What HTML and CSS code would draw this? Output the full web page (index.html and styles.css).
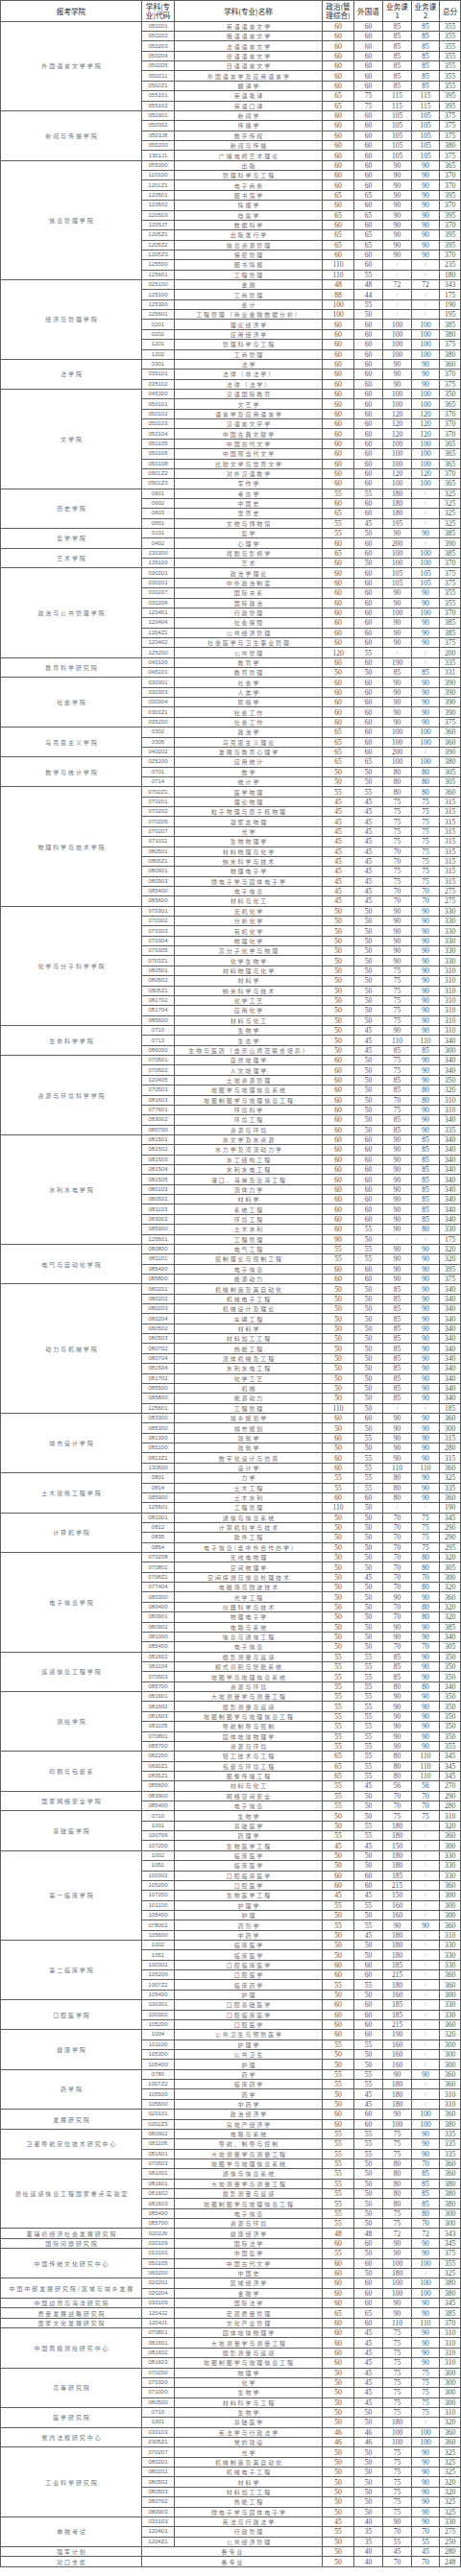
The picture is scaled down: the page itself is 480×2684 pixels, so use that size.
FILE: index.html
```html
<!DOCTYPE html>
<html lang="zh-CN">
<head>
<meta charset="utf-8">
<title>复试基本分数线</title>
<link rel="stylesheet" href="styles.css">
</head>
<body>
<table class="t">
<colgroup><col class="w1"><col class="w2"><col class="w3"><col class="w4"><col class="w5"><col class="w6"><col class="w7"><col class="w8"></colgroup>
<tbody>
<tr class="h"><th>报考学院</th><th>学科(专<br>业)代码</th><th>学科(专业)名称</th><th>政治(管<br>理综合)</th><th>外国语</th><th>业务课<br>1</th><th>业务课<br>2</th><th>总分</th></tr>

<tr><td class="s" rowspan="9">外国语言文学学院</td><td class="c">050201</td><td class="n">英语语言文学</td><td>60</td><td>60</td><td>85</td><td>85</td><td>355</td></tr>
<tr><td class="c">050202</td><td class="n">俄语语言文学</td><td>60</td><td>60</td><td>85</td><td>85</td><td>355</td></tr>
<tr><td class="c">050203</td><td class="n">法语语言文学</td><td>60</td><td>60</td><td>85</td><td>85</td><td>355</td></tr>
<tr><td class="c">050204</td><td class="n">德语语言文学</td><td>60</td><td>60</td><td>85</td><td>85</td><td>355</td></tr>
<tr><td class="c">050205</td><td class="n">日语语言文学</td><td>60</td><td>60</td><td>85</td><td>85</td><td>355</td></tr>
<tr><td class="c">050211</td><td class="n">外国语言学及应用语言学</td><td>60</td><td>60</td><td>85</td><td>85</td><td>355</td></tr>
<tr><td class="c">0502Z1</td><td class="n">翻译学</td><td>60</td><td>60</td><td>85</td><td>85</td><td>355</td></tr>
<tr><td class="c">055101</td><td class="n">英语笔译</td><td>65</td><td>75</td><td>115</td><td>115</td><td>395</td></tr>
<tr><td class="c">055102</td><td class="n">英语口译</td><td>65</td><td>75</td><td>115</td><td>115</td><td>395</td></tr>

<tr><td class="s" rowspan="5">新闻与传播学院</td><td class="c">050301</td><td class="n">新闻学</td><td>60</td><td>60</td><td>105</td><td>105</td><td>375</td></tr>
<tr><td class="c">050302</td><td class="n">传播学</td><td>60</td><td>60</td><td>105</td><td>105</td><td>375</td></tr>
<tr><td class="c">0503J8</td><td class="n">数字传媒</td><td>60</td><td>60</td><td>105</td><td>105</td><td>375</td></tr>
<tr><td class="c">055200</td><td class="n">新闻与传播</td><td>60</td><td>60</td><td>105</td><td>105</td><td>380</td></tr>
<tr><td class="c">1301J1</td><td class="n">广播电视艺术理论</td><td>60</td><td>60</td><td>105</td><td>105</td><td>375</td></tr>

<tr><td class="s" rowspan="12">信息管理学院</td><td class="c">055300</td><td class="n">出版</td><td>60</td><td>60</td><td>90</td><td>90</td><td>365</td></tr>
<tr><td class="c">120100</td><td class="n">管理科学与工程</td><td>60</td><td>60</td><td>90</td><td>90</td><td>370</td></tr>
<tr><td class="c">1201Z1</td><td class="n">电子商务</td><td>60</td><td>60</td><td>90</td><td>90</td><td>370</td></tr>
<tr><td class="c">120501</td><td class="n">图书馆学</td><td>65</td><td>65</td><td>90</td><td>90</td><td>395</td></tr>
<tr><td class="c">120502</td><td class="n">情报学</td><td>60</td><td>60</td><td>90</td><td>90</td><td>370</td></tr>
<tr><td class="c">120503</td><td class="n">档案学</td><td>65</td><td>65</td><td>90</td><td>90</td><td>395</td></tr>
<tr><td class="c">1205J7</td><td class="n">数据科学</td><td>60</td><td>60</td><td>90</td><td>90</td><td>370</td></tr>
<tr><td class="c">1205Z1</td><td class="n">出版发行学</td><td>65</td><td>65</td><td>90</td><td>90</td><td>395</td></tr>
<tr><td class="c">1205Z2</td><td class="n">信息资源管理</td><td>65</td><td>65</td><td>90</td><td>90</td><td>395</td></tr>
<tr><td class="c">1205Z3</td><td class="n">保密管理</td><td>60</td><td>60</td><td>90</td><td>90</td><td>370</td></tr>
<tr><td class="c">125500</td><td class="n">图书情报</td><td>110</td><td>60</td><td class="x">/</td><td class="x">/</td><td>235</td></tr>
<tr><td class="c">125601</td><td class="n">工程管理</td><td>110</td><td>55</td><td class="x">/</td><td class="x">/</td><td>180</td></tr>

<tr><td class="s" rowspan="8">经济与管理学院</td><td class="c">025100</td><td class="n">金融</td><td>48</td><td>48</td><td>72</td><td>72</td><td>343</td></tr>
<tr><td class="c">125100</td><td class="n">工商管理</td><td>88</td><td>44</td><td class="x">/</td><td class="x">/</td><td>175</td></tr>
<tr><td class="c">125300</td><td class="n">会计</td><td>100</td><td>55</td><td class="x">/</td><td class="x">/</td><td>190</td></tr>
<tr><td class="c">125601</td><td class="n">工程管理（商业金融数据分析）</td><td>100</td><td>50</td><td class="x">/</td><td class="x">/</td><td>195</td></tr>
<tr><td class="c">0201</td><td class="n">理论经济学</td><td>60</td><td>60</td><td>100</td><td>100</td><td>385</td></tr>
<tr><td class="c">0202</td><td class="n">应用经济学</td><td>60</td><td>60</td><td>100</td><td>100</td><td>380</td></tr>
<tr><td class="c">1201</td><td class="n">管理科学与工程</td><td>60</td><td>60</td><td>100</td><td>100</td><td>375</td></tr>
<tr><td class="c">1202</td><td class="n">工商管理</td><td>60</td><td>60</td><td>100</td><td>100</td><td>380</td></tr>

<tr><td class="s" rowspan="3">法学院</td><td class="c">0301</td><td class="n">法学</td><td>60</td><td>60</td><td>90</td><td>90</td><td>360</td></tr>
<tr><td class="c">035101</td><td class="n">法律（非法学）</td><td>60</td><td>60</td><td>90</td><td>90</td><td>370</td></tr>
<tr><td class="c">035102</td><td class="n">法律（法学）</td><td>60</td><td>60</td><td>90</td><td>90</td><td>375</td></tr>

<tr><td class="s" rowspan="10">文学院</td><td class="c">045300</td><td class="n">汉语国际教育</td><td>60</td><td>60</td><td>100</td><td>100</td><td>350</td></tr>
<tr><td class="c">050101</td><td class="n">文艺学</td><td>60</td><td>60</td><td>100</td><td>100</td><td>365</td></tr>
<tr><td class="c">050102</td><td class="n">语言学及应用语言学</td><td>60</td><td>60</td><td>120</td><td>120</td><td>370</td></tr>
<tr><td class="c">050103</td><td class="n">汉语言文字学</td><td>60</td><td>60</td><td>120</td><td>120</td><td>370</td></tr>
<tr><td class="c">050104</td><td class="n">中国古典文献学</td><td>60</td><td>60</td><td>120</td><td>120</td><td>370</td></tr>
<tr><td class="c">050105</td><td class="n">中国古代文学</td><td>60</td><td>60</td><td>100</td><td>100</td><td>365</td></tr>
<tr><td class="c">050106</td><td class="n">中国现当代文学</td><td>60</td><td>60</td><td>100</td><td>100</td><td>365</td></tr>
<tr><td class="c">050108</td><td class="n">比较文学与世界文学</td><td>60</td><td>60</td><td>100</td><td>100</td><td>365</td></tr>
<tr><td class="c">0501Z2</td><td class="n">对外汉语教学</td><td>60</td><td>60</td><td>120</td><td>120</td><td>370</td></tr>
<tr><td class="c">0501Z3</td><td class="n">写作学</td><td>60</td><td>60</td><td>100</td><td>100</td><td>365</td></tr>

<tr><td class="s" rowspan="4">历史学院</td><td class="c">0601</td><td class="n">考古学</td><td>55</td><td>55</td><td>180</td><td class="x">/</td><td>325</td></tr>
<tr><td class="c">0602</td><td class="n">中国史</td><td>60</td><td>60</td><td>180</td><td class="x">/</td><td>325</td></tr>
<tr><td class="c">0603</td><td class="n">世界史</td><td>65</td><td>60</td><td>180</td><td class="x">/</td><td>325</td></tr>
<tr><td class="c">0651</td><td class="n">文物与博物馆</td><td>55</td><td>45</td><td>195</td><td class="x">/</td><td>325</td></tr>

<tr><td class="s" rowspan="2">哲学学院</td><td class="c">0101</td><td class="n">哲学</td><td>55</td><td>50</td><td>90</td><td>90</td><td>385</td></tr>
<tr><td class="c">0402</td><td class="n">心理学</td><td>60</td><td>60</td><td>200</td><td class="x">/</td><td>390</td></tr>

<tr><td class="s" rowspan="2">艺术学院</td><td class="c">130300</td><td class="n">戏剧与影视学</td><td>65</td><td>60</td><td>100</td><td>100</td><td>385</td></tr>
<tr><td class="c">135100</td><td class="n">艺术</td><td>60</td><td>50</td><td>100</td><td>100</td><td>370</td></tr>

<tr><td class="s" rowspan="9">政治与公共管理学院</td><td class="c">030201</td><td class="n">政治学理论</td><td>60</td><td>60</td><td>105</td><td>105</td><td>375</td></tr>
<tr><td class="c">030202</td><td class="n">中外政治制度</td><td>60</td><td>60</td><td>105</td><td>105</td><td>375</td></tr>
<tr><td class="c">030207</td><td class="n">国际关系</td><td>60</td><td>60</td><td>90</td><td>90</td><td>355</td></tr>
<tr><td class="c">030206</td><td class="n">国际政治</td><td>60</td><td>60</td><td>90</td><td>90</td><td>355</td></tr>
<tr><td class="c">120401</td><td class="n">行政管理</td><td>60</td><td>60</td><td>100</td><td>100</td><td>370</td></tr>
<tr><td class="c">120404</td><td class="n">社会保障</td><td>60</td><td>60</td><td>90</td><td>90</td><td>385</td></tr>
<tr><td class="c">1204Z1</td><td class="n">公共经济管理</td><td>60</td><td>60</td><td>90</td><td>90</td><td>385</td></tr>
<tr><td class="c">120402</td><td class="n">社会医学与卫生事业管理</td><td>60</td><td>60</td><td>90</td><td>90</td><td>375</td></tr>
<tr><td class="c">125200</td><td class="n">公共管理</td><td>120</td><td>55</td><td class="x">/</td><td class="x">/</td><td>200</td></tr>

<tr><td class="s" rowspan="2">教育科学研究院</td><td class="c">040100</td><td class="n">教育学</td><td>60</td><td>60</td><td>190</td><td class="x">/</td><td>335</td></tr>
<tr><td class="c">045101</td><td class="n">教育管理</td><td>50</td><td>50</td><td>85</td><td>85</td><td>331</td></tr>

<tr><td class="s" rowspan="5">社会学院</td><td class="c">030301</td><td class="n">社会学</td><td>60</td><td>60</td><td>90</td><td>90</td><td>390</td></tr>
<tr><td class="c">030303</td><td class="n">人类学</td><td>60</td><td>60</td><td>90</td><td>90</td><td>390</td></tr>
<tr><td class="c">030304</td><td class="n">民俗学</td><td>60</td><td>60</td><td>90</td><td>90</td><td>390</td></tr>
<tr><td class="c">0303Z1</td><td class="n">社会工作</td><td>60</td><td>60</td><td>90</td><td>90</td><td>390</td></tr>
<tr><td class="c">035200</td><td class="n">社会工作</td><td>60</td><td>60</td><td>90</td><td>90</td><td>375</td></tr>

<tr><td class="s" rowspan="3">马克思主义学院</td><td class="c">0302</td><td class="n">政治学</td><td>65</td><td>60</td><td>100</td><td>100</td><td>360</td></tr>
<tr><td class="c">0305</td><td class="n">马克思主义理论</td><td>65</td><td>60</td><td>100</td><td>100</td><td>360</td></tr>
<tr><td class="c">040202</td><td class="n">发展与教育心理学</td><td>65</td><td>60</td><td>200</td><td class="x">/</td><td>390</td></tr>

<tr><td class="s" rowspan="3">数学与统计学院</td><td class="c">025200</td><td class="n">应用统计</td><td>65</td><td>65</td><td>100</td><td>100</td><td>380</td></tr>
<tr><td class="c">0701</td><td class="n">数学</td><td>50</td><td>50</td><td>80</td><td>80</td><td>305</td></tr>
<tr><td class="c">0714</td><td class="n">统计学</td><td>50</td><td>50</td><td>80</td><td>80</td><td>305</td></tr>

<tr><td class="s" rowspan="12">物理科学与技术学院</td><td class="c">0702Z1</td><td class="n">医学物理</td><td>55</td><td>55</td><td>80</td><td>80</td><td>360</td></tr>
<tr><td class="c">070201</td><td class="n">理论物理</td><td>45</td><td>45</td><td>75</td><td>75</td><td>315</td></tr>
<tr><td class="c">070202</td><td class="n">粒子物理与原子核物理</td><td>45</td><td>45</td><td>75</td><td>75</td><td>315</td></tr>
<tr><td class="c">070205</td><td class="n">凝聚态物理</td><td>45</td><td>45</td><td>75</td><td>75</td><td>315</td></tr>
<tr><td class="c">070207</td><td class="n">光学</td><td>45</td><td>45</td><td>75</td><td>75</td><td>315</td></tr>
<tr><td class="c">071011</td><td class="n">生物物理学</td><td>45</td><td>45</td><td>75</td><td>75</td><td>315</td></tr>
<tr><td class="c">080501</td><td class="n">材料物理与化学</td><td>45</td><td>45</td><td>70</td><td>75</td><td>315</td></tr>
<tr><td class="c">0805Z1</td><td class="n">纳米科学与技术</td><td>45</td><td>45</td><td>70</td><td>75</td><td>315</td></tr>
<tr><td class="c">080901</td><td class="n">物理电子学</td><td>45</td><td>45</td><td>75</td><td>75</td><td>315</td></tr>
<tr><td class="c">080903</td><td class="n">微电子学与固体电子学</td><td>45</td><td>45</td><td>75</td><td>75</td><td>315</td></tr>
<tr><td class="c">085400</td><td class="n">电子信息</td><td>45</td><td>45</td><td>70</td><td>70</td><td>275</td></tr>
<tr><td class="c">085600</td><td class="n">材料与化工</td><td>45</td><td>45</td><td>70</td><td>70</td><td>275</td></tr>

<tr><td class="s" rowspan="12">化学与分子科学学院</td><td class="c">070301</td><td class="n">无机化学</td><td>50</td><td>50</td><td>90</td><td>90</td><td>330</td></tr>
<tr><td class="c">070302</td><td class="n">分析化学</td><td>50</td><td>50</td><td>90</td><td>90</td><td>330</td></tr>
<tr><td class="c">070303</td><td class="n">有机化学</td><td>50</td><td>50</td><td>90</td><td>90</td><td>330</td></tr>
<tr><td class="c">070304</td><td class="n">物理化学</td><td>50</td><td>50</td><td>90</td><td>90</td><td>330</td></tr>
<tr><td class="c">070305</td><td class="n">高分子化学与物理</td><td>50</td><td>50</td><td>90</td><td>90</td><td>330</td></tr>
<tr><td class="c">0703Z1</td><td class="n">化学生物学</td><td>50</td><td>50</td><td>90</td><td>90</td><td>330</td></tr>
<tr><td class="c">080501</td><td class="n">材料物理与化学</td><td>50</td><td>50</td><td>75</td><td>90</td><td>310</td></tr>
<tr><td class="c">080502</td><td class="n">材料学</td><td>50</td><td>50</td><td>75</td><td>90</td><td>310</td></tr>
<tr><td class="c">0805Z1</td><td class="n">纳米科学与技术</td><td>50</td><td>50</td><td>75</td><td>90</td><td>310</td></tr>
<tr><td class="c">081702</td><td class="n">化学工艺</td><td>50</td><td>50</td><td>75</td><td>90</td><td>310</td></tr>
<tr><td class="c">081704</td><td class="n">应用化学</td><td>50</td><td>50</td><td>75</td><td>90</td><td>310</td></tr>
<tr><td class="c">085600</td><td class="n">材料与化工</td><td>50</td><td>50</td><td>75</td><td>90</td><td>310</td></tr>

<tr><td class="s" rowspan="3">生命科学学院</td><td class="c">0710</td><td class="n">生物学</td><td>50</td><td>45</td><td>90</td><td>90</td><td>310</td></tr>
<tr><td class="c">0713</td><td class="n">生态学</td><td>50</td><td>45</td><td>110</td><td>110</td><td>340</td></tr>
<tr><td class="c">086000</td><td class="n">生物与医药（含乐山师范联合培养）</td><td>50</td><td>45</td><td>85</td><td>85</td><td>300</td></tr>

<tr><td class="s" rowspan="8">资源与环境科学学院</td><td class="c">070501</td><td class="n">自然地理学</td><td>60</td><td>50</td><td>75</td><td>90</td><td>340</td></tr>
<tr><td class="c">070502</td><td class="n">人文地理学</td><td>60</td><td>50</td><td>75</td><td>90</td><td>340</td></tr>
<tr><td class="c">120405</td><td class="n">土地资源管理</td><td>60</td><td>50</td><td>85</td><td>90</td><td>350</td></tr>
<tr><td class="c">070503</td><td class="n">地图学与地理信息系统</td><td>60</td><td>50</td><td>85</td><td>80</td><td>320</td></tr>
<tr><td class="c">081603</td><td class="n">地图制图学与地理信息工程</td><td>60</td><td>50</td><td>70</td><td>80</td><td>310</td></tr>
<tr><td class="c">077601</td><td class="n">环境科学</td><td>60</td><td>50</td><td>75</td><td>90</td><td>310</td></tr>
<tr><td class="c">083002</td><td class="n">环境工程</td><td>60</td><td>50</td><td>85</td><td>90</td><td>340</td></tr>
<tr><td class="c">085700</td><td class="n">资源与环境</td><td>60</td><td>50</td><td>85</td><td>90</td><td>335</td></tr>

<tr><td class="s" rowspan="11">水利水电学院</td><td class="c">081501</td><td class="n">水文学及水资源</td><td>60</td><td>60</td><td>90</td><td>85</td><td>340</td></tr>
<tr><td class="c">081502</td><td class="n">水力学及河流动力学</td><td>60</td><td>60</td><td>90</td><td>85</td><td>340</td></tr>
<tr><td class="c">081503</td><td class="n">水工结构工程</td><td>60</td><td>60</td><td>90</td><td>85</td><td>340</td></tr>
<tr><td class="c">081504</td><td class="n">水利水电工程</td><td>60</td><td>60</td><td>90</td><td>85</td><td>340</td></tr>
<tr><td class="c">081505</td><td class="n">港口、海岸及近海工程</td><td>60</td><td>60</td><td>90</td><td>85</td><td>340</td></tr>
<tr><td class="c">080103</td><td class="n">流体力学</td><td>60</td><td>60</td><td>90</td><td>85</td><td>340</td></tr>
<tr><td class="c">080502</td><td class="n">材料学</td><td>60</td><td>60</td><td>90</td><td>85</td><td>340</td></tr>
<tr><td class="c">081103</td><td class="n">系统工程</td><td>60</td><td>60</td><td>90</td><td>85</td><td>340</td></tr>
<tr><td class="c">083002</td><td class="n">环境工程</td><td>60</td><td>60</td><td>90</td><td>85</td><td>340</td></tr>
<tr><td class="c">085900</td><td class="n">土木水利</td><td>60</td><td>55</td><td>90</td><td>80</td><td>330</td></tr>
<tr><td class="c">125601</td><td class="n">工程管理</td><td>90</td><td>50</td><td class="x">/</td><td class="x">/</td><td>175</td></tr>

<tr><td class="s" rowspan="4">电气与自动化学院</td><td class="c">080800</td><td class="n">电气工程</td><td>55</td><td>55</td><td>90</td><td>90</td><td>320</td></tr>
<tr><td class="c">081101</td><td class="n">控制理论与控制工程</td><td>55</td><td>55</td><td>90</td><td>90</td><td>320</td></tr>
<tr><td class="c">085400</td><td class="n">电子信息</td><td>60</td><td>60</td><td>90</td><td>90</td><td>395</td></tr>
<tr><td class="c">085800</td><td class="n">能源动力</td><td>60</td><td>60</td><td>90</td><td>90</td><td>375</td></tr>

<tr><td class="s" rowspan="13">动力与机械学院</td><td class="c">080201</td><td class="n">机械制造及其自动化</td><td>50</td><td>50</td><td>85</td><td>90</td><td>340</td></tr>
<tr><td class="c">080202</td><td class="n">机械电子工程</td><td>50</td><td>50</td><td>85</td><td>90</td><td>340</td></tr>
<tr><td class="c">080203</td><td class="n">机械设计及理论</td><td>50</td><td>50</td><td>85</td><td>90</td><td>340</td></tr>
<tr><td class="c">080204</td><td class="n">车辆工程</td><td>50</td><td>50</td><td>85</td><td>90</td><td>340</td></tr>
<tr><td class="c">080502</td><td class="n">材料学</td><td>50</td><td>50</td><td>85</td><td>90</td><td>340</td></tr>
<tr><td class="c">080503</td><td class="n">材料加工工程</td><td>50</td><td>50</td><td>85</td><td>90</td><td>340</td></tr>
<tr><td class="c">080702</td><td class="n">热能工程</td><td>50</td><td>50</td><td>85</td><td>90</td><td>340</td></tr>
<tr><td class="c">080704</td><td class="n">流体机械及工程</td><td>50</td><td>50</td><td>85</td><td>90</td><td>340</td></tr>
<tr><td class="c">081504</td><td class="n">水利水电工程</td><td>50</td><td>50</td><td>85</td><td>90</td><td>340</td></tr>
<tr><td class="c">081702</td><td class="n">化学工艺</td><td>50</td><td>50</td><td>85</td><td>90</td><td>340</td></tr>
<tr><td class="c">085500</td><td class="n">机械</td><td>50</td><td>50</td><td>85</td><td>90</td><td>340</td></tr>
<tr><td class="c">085800</td><td class="n">能源动力</td><td>50</td><td>50</td><td>85</td><td>90</td><td>340</td></tr>
<tr><td class="c">125601</td><td class="n">工程管理</td><td>110</td><td>50</td><td class="x">/</td><td class="x">/</td><td>185</td></tr>

<tr><td class="s" rowspan="6">城市设计学院</td><td class="c">083300</td><td class="n">城乡规划学</td><td>60</td><td>60</td><td>90</td><td>90</td><td>360</td></tr>
<tr><td class="c">085300</td><td class="n">城市规划</td><td>50</td><td>50</td><td>90</td><td>90</td><td>300</td></tr>
<tr><td class="c">081300</td><td class="n">建筑学</td><td>60</td><td>55</td><td>90</td><td>90</td><td>315</td></tr>
<tr><td class="c">085100</td><td class="n">建筑学</td><td>50</td><td>50</td><td>90</td><td>90</td><td>280</td></tr>
<tr><td class="c">0813Z1</td><td class="n">数字化设计与仿真</td><td>60</td><td>55</td><td>90</td><td>90</td><td>315</td></tr>
<tr><td class="c">130500</td><td class="n">设计学</td><td>60</td><td>55</td><td>110</td><td>110</td><td>360</td></tr>

<tr><td class="s" rowspan="4">土木建筑工程学院</td><td class="c">0801</td><td class="n">力学</td><td>55</td><td>55</td><td>80</td><td>90</td><td>325</td></tr>
<tr><td class="c">0814</td><td class="n">土木工程</td><td>55</td><td>55</td><td>80</td><td>90</td><td>335</td></tr>
<tr><td class="c">085900</td><td class="n">土木水利</td><td>60</td><td>60</td><td>80</td><td>90</td><td>360</td></tr>
<tr><td class="c">125601</td><td class="n">工程管理</td><td>110</td><td>50</td><td class="x">/</td><td class="x">/</td><td>190</td></tr>

<tr><td class="s" rowspan="4">计算机学院</td><td class="c">081001</td><td class="n">通信与信息系统</td><td>50</td><td>50</td><td>70</td><td>75</td><td>345</td></tr>
<tr><td class="c">0812</td><td class="n">计算机科学与技术</td><td>50</td><td>50</td><td>70</td><td>75</td><td>290</td></tr>
<tr><td class="c">0835</td><td class="n">软件工程</td><td>50</td><td>50</td><td>70</td><td>75</td><td>290</td></tr>
<tr><td class="c">0854</td><td class="n">电子信息(含中外合作办学)</td><td>50</td><td>50</td><td>70</td><td>75</td><td>295</td></tr>

<tr><td class="s" rowspan="10">电子信息学院</td><td class="c">070208</td><td class="n">无线电物理</td><td>50</td><td>50</td><td>70</td><td>80</td><td>320</td></tr>
<tr><td class="c">070802</td><td class="n">空间物理学</td><td>50</td><td>50</td><td>70</td><td>80</td><td>305</td></tr>
<tr><td class="c">0708Z1</td><td class="n">空间探测与信息处理技术</td><td>50</td><td>45</td><td>70</td><td>70</td><td>300</td></tr>
<tr><td class="c">077404</td><td class="n">电磁场与微波技术</td><td>50</td><td>50</td><td>70</td><td>80</td><td>320</td></tr>
<tr><td class="c">080300</td><td class="n">光学工程</td><td>50</td><td>50</td><td>90</td><td>90</td><td>360</td></tr>
<tr><td class="c">080400</td><td class="n">仪器科学与技术</td><td>50</td><td>50</td><td>70</td><td>80</td><td>320</td></tr>
<tr><td class="c">080901</td><td class="n">物理电子学</td><td>50</td><td>50</td><td>70</td><td>80</td><td>320</td></tr>
<tr><td class="c">080902</td><td class="n">电路与系统</td><td>50</td><td>50</td><td>90</td><td>90</td><td>385</td></tr>
<tr><td class="c">081000</td><td class="n">信息与通信工程</td><td>50</td><td>50</td><td>90</td><td>90</td><td>340</td></tr>
<tr><td class="c">085400</td><td class="n">电子信息</td><td>50</td><td>50</td><td>70</td><td>70</td><td>305</td></tr>

<tr><td class="s" rowspan="4">遥感信息工程学院</td><td class="c">081602</td><td class="n">摄影测量与遥感</td><td>55</td><td>55</td><td>85</td><td>90</td><td>350</td></tr>
<tr><td class="c">081104</td><td class="n">模式识别与智能系统</td><td>55</td><td>55</td><td>85</td><td>90</td><td>350</td></tr>
<tr><td class="c">070503</td><td class="n">地图学与地理信息系统</td><td>55</td><td>55</td><td>85</td><td>90</td><td>350</td></tr>
<tr><td class="c">085700</td><td class="n">资源与环境</td><td>55</td><td>55</td><td>80</td><td>80</td><td>340</td></tr>

<tr><td class="s" rowspan="6">测绘学院</td><td class="c">081601</td><td class="n">大地测量学与测量工程</td><td>55</td><td>55</td><td>90</td><td>90</td><td>350</td></tr>
<tr><td class="c">081602</td><td class="n">摄影测量与遥感</td><td>55</td><td>55</td><td>90</td><td>90</td><td>350</td></tr>
<tr><td class="c">081603</td><td class="n">地图制图学与地理信息工程</td><td>55</td><td>55</td><td>90</td><td>90</td><td>350</td></tr>
<tr><td class="c">081105</td><td class="n">导航制导与控制</td><td>55</td><td>55</td><td>90</td><td>90</td><td>350</td></tr>
<tr><td class="c">070801</td><td class="n">固体地球物理学</td><td>55</td><td>55</td><td>90</td><td>90</td><td>350</td></tr>
<tr><td class="c">085700</td><td class="n">资源与环境</td><td>55</td><td>55</td><td>90</td><td>90</td><td>355</td></tr>

<tr><td class="s" rowspan="4">印刷与包装系</td><td class="c">082200</td><td class="n">轻工技术与工程</td><td>65</td><td>55</td><td>80</td><td>110</td><td>345</td></tr>
<tr><td class="c">0830Z1</td><td class="n">包装与环境工程</td><td>65</td><td>55</td><td>80</td><td>110</td><td>345</td></tr>
<tr><td class="c">0835Z1</td><td class="n">图像传播工程</td><td>65</td><td>55</td><td>80</td><td>110</td><td>345</td></tr>
<tr><td class="c">085600</td><td class="n">材料与化工</td><td>55</td><td>45</td><td>56</td><td>56</td><td>270</td></tr>

<tr><td class="s" rowspan="2">国家网络安全学院</td><td class="c">083900</td><td class="n">网络空间安全</td><td>55</td><td>50</td><td>70</td><td>70</td><td>290</td></tr>
<tr><td class="c">085400</td><td class="n">电子信息</td><td>55</td><td>50</td><td>70</td><td>70</td><td>280</td></tr>

<tr><td class="s" rowspan="4">基础医学院</td><td class="c">0710</td><td class="n">生物学</td><td>50</td><td>50</td><td>75</td><td>75</td><td>310</td></tr>
<tr><td class="c">1001</td><td class="n">基础医学</td><td>50</td><td>55</td><td>180</td><td class="x">/</td><td>320</td></tr>
<tr><td class="c">100706</td><td class="n">药理学</td><td>55</td><td>55</td><td>180</td><td class="x">/</td><td>360</td></tr>
<tr><td class="c">107200</td><td class="n">生物医学工程</td><td>45</td><td>45</td><td>150</td><td class="x">/</td><td>300</td></tr>

<tr><td class="s" rowspan="9">第一临床学院</td><td class="c">1002</td><td class="n">临床医学</td><td>50</td><td>50</td><td>180</td><td class="x">/</td><td>330</td></tr>
<tr><td class="c">1051</td><td class="n">临床医学</td><td>50</td><td>50</td><td>180</td><td class="x">/</td><td>330</td></tr>
<tr><td class="c">100302</td><td class="n">口腔临床医学</td><td>60</td><td>60</td><td>185</td><td class="x">/</td><td>330</td></tr>
<tr><td class="c">105200</td><td class="n">口腔医学</td><td>60</td><td>60</td><td>215</td><td class="x">/</td><td>360</td></tr>
<tr><td class="c">107200</td><td class="n">生物医学工程</td><td>45</td><td>45</td><td>150</td><td class="x">/</td><td>300</td></tr>
<tr><td class="c">101100</td><td class="n">护理学</td><td>55</td><td>55</td><td>160</td><td class="x">/</td><td>300</td></tr>
<tr><td class="c">105400</td><td class="n">护理</td><td>50</td><td>50</td><td>160</td><td class="x">/</td><td>300</td></tr>
<tr><td class="c">078002</td><td class="n">药剂学</td><td>55</td><td>55</td><td>90</td><td>90</td><td>360</td></tr>
<tr><td class="c">105600</td><td class="n">中药学</td><td>50</td><td>45</td><td>180</td><td class="x">/</td><td>310</td></tr>

<tr><td class="s" rowspan="6">第二临床学院</td><td class="c">1002</td><td class="n">临床医学</td><td>50</td><td>50</td><td>180</td><td class="x">/</td><td>330</td></tr>
<tr><td class="c">1051</td><td class="n">临床医学</td><td>50</td><td>50</td><td>180</td><td class="x">/</td><td>330</td></tr>
<tr><td class="c">100302</td><td class="n">口腔临床医学</td><td>60</td><td>60</td><td>185</td><td class="x">/</td><td>330</td></tr>
<tr><td class="c">105200</td><td class="n">口腔医学</td><td>60</td><td>60</td><td>215</td><td class="x">/</td><td>360</td></tr>
<tr><td class="c">1007Z2</td><td class="n">临床药学</td><td>55</td><td>55</td><td>180</td><td class="x">/</td><td>360</td></tr>
<tr><td class="c">105400</td><td class="n">护理</td><td>50</td><td>50</td><td>160</td><td class="x">/</td><td>300</td></tr>

<tr><td class="s" rowspan="3">口腔医学院</td><td class="c">100301</td><td class="n">口腔基础医学</td><td>60</td><td>60</td><td>185</td><td class="x">/</td><td>330</td></tr>
<tr><td class="c">100302</td><td class="n">口腔临床医学</td><td>60</td><td>60</td><td>185</td><td class="x">/</td><td>330</td></tr>
<tr><td class="c">105200</td><td class="n">口腔医学</td><td>60</td><td>60</td><td>215</td><td class="x">/</td><td>360</td></tr>

<tr><td class="s" rowspan="4">健康学院</td><td class="c">1004</td><td class="n">公共卫生与预防医学</td><td>60</td><td>60</td><td>190</td><td class="x">/</td><td>320</td></tr>
<tr><td class="c">101100</td><td class="n">护理学</td><td>55</td><td>55</td><td>160</td><td class="x">/</td><td>300</td></tr>
<tr><td class="c">105300</td><td class="n">公共卫生</td><td>50</td><td>50</td><td>160</td><td class="x">/</td><td>300</td></tr>
<tr><td class="c">105400</td><td class="n">护理</td><td>50</td><td>50</td><td>160</td><td class="x">/</td><td>300</td></tr>

<tr><td class="s" rowspan="4">药学院</td><td class="c">0780</td><td class="n">药学</td><td>55</td><td>55</td><td>90</td><td>90</td><td>360</td></tr>
<tr><td class="c">1007Z2</td><td class="n">临床药学</td><td>55</td><td>55</td><td>180</td><td class="x">/</td><td>360</td></tr>
<tr><td class="c">105500</td><td class="n">药学</td><td>50</td><td>45</td><td>180</td><td class="x">/</td><td>310</td></tr>
<tr><td class="c">105600</td><td class="n">中药学</td><td>50</td><td>45</td><td>180</td><td class="x">/</td><td>310</td></tr>

<tr><td class="s" rowspan="2">发展研究院</td><td class="c">020101</td><td class="n">政治经济学</td><td>60</td><td>60</td><td>90</td><td>100</td><td>360</td></tr>
<tr><td class="c">0202Z3</td><td class="n">房地产经济学</td><td>60</td><td>60</td><td>100</td><td>100</td><td>380</td></tr>

<tr><td class="s" rowspan="3">卫星导航定位技术研究中心</td><td class="c">080902</td><td class="n">电路与系统</td><td>55</td><td>55</td><td>75</td><td>90</td><td>335</td></tr>
<tr><td class="c">081105</td><td class="n">导航、制导与控制</td><td>55</td><td>55</td><td>75</td><td>90</td><td>335</td></tr>
<tr><td class="c">081601</td><td class="n">大地测量学与测量工程</td><td>55</td><td>55</td><td>75</td><td>90</td><td>335</td></tr>

<tr><td class="s" rowspan="7">测绘遥感信息工程国家重点实验室</td><td class="c">070503</td><td class="n">地图学与地理信息系统</td><td>55</td><td>50</td><td>80</td><td>70</td><td>360</td></tr>
<tr><td class="c">081001</td><td class="n">通信与信息系统</td><td>55</td><td>50</td><td>80</td><td>85</td><td>360</td></tr>
<tr><td class="c">081601</td><td class="n">大地测量学与测量工程</td><td>55</td><td>50</td><td>80</td><td>85</td><td>380</td></tr>
<tr><td class="c">081602</td><td class="n">摄影测量与遥感</td><td>55</td><td>50</td><td>80</td><td>85</td><td>380</td></tr>
<tr><td class="c">081603</td><td class="n">地图制图学与地理信息工程</td><td>55</td><td>50</td><td>80</td><td>85</td><td>380</td></tr>
<tr><td class="c">085400</td><td class="n">电子信息</td><td>55</td><td>50</td><td>75</td><td>80</td><td>300</td></tr>
<tr><td class="c">085700</td><td class="n">资源与环境</td><td>55</td><td>50</td><td>75</td><td>70</td><td>300</td></tr>

<tr><td class="s">董辅礽经济社会发展研究院</td><td class="c">0202J6</td><td class="n">健康经济学</td><td>48</td><td>48</td><td>72</td><td>72</td><td>343</td></tr>

<tr><td class="s">国际问题研究院</td><td class="c">030109</td><td class="n">国际法学</td><td>60</td><td>60</td><td>90</td><td>90</td><td>345</td></tr>

<tr><td class="s" rowspan="3">中国传统文化研究中心</td><td class="c">010102</td><td class="n">中国哲学</td><td>55</td><td>50</td><td>90</td><td>90</td><td>375</td></tr>
<tr><td class="c">050105</td><td class="n">中国古代文学</td><td>60</td><td>60</td><td>100</td><td>100</td><td>355</td></tr>
<tr><td class="c">060200</td><td class="n">中国史</td><td>60</td><td>50</td><td>180</td><td class="x">/</td><td>325</td></tr>

<tr><td class="s" rowspan="2">中国中部发展研究院/区域与城乡发展</td><td class="c">020202</td><td class="n">区域经济学</td><td>60</td><td>60</td><td>100</td><td>100</td><td>380</td></tr>
<tr><td class="c">020204</td><td class="n">金融学</td><td>60</td><td>60</td><td>100</td><td>100</td><td>380</td></tr>

<tr><td class="s">中国边界与海洋研究院</td><td class="c">030109</td><td class="n">国际法学</td><td>60</td><td>60</td><td>90</td><td>90</td><td>345</td></tr>
<tr><td class="s">质量发展战略研究院</td><td class="c">1204J2</td><td class="n">宏观质量管理</td><td>65</td><td>65</td><td>90</td><td>90</td><td>385</td></tr>
<tr><td class="s">国家文化发展研究院</td><td class="c">1204J1</td><td class="n">文化产业管理</td><td>60</td><td>60</td><td>110</td><td>110</td><td>370</td></tr>

<tr><td class="s" rowspan="4">中国南极测绘研究中心</td><td class="c">070801</td><td class="n">固体地球物理学</td><td>60</td><td>45</td><td>75</td><td>90</td><td>310</td></tr>
<tr><td class="c">081601</td><td class="n">大地测量学与测量工程</td><td>60</td><td>45</td><td>75</td><td>90</td><td>310</td></tr>
<tr><td class="c">081602</td><td class="n">摄影测量与遥感</td><td>60</td><td>45</td><td>75</td><td>90</td><td>310</td></tr>
<tr><td class="c">081603</td><td class="n">地图制图学与地理信息工程</td><td>60</td><td>45</td><td>75</td><td>90</td><td>310</td></tr>

<tr><td class="s" rowspan="4">高等研究院</td><td class="c">070200</td><td class="n">物理学</td><td>50</td><td>45</td><td>75</td><td>75</td><td>300</td></tr>
<tr><td class="c">070300</td><td class="n">化学</td><td>50</td><td>45</td><td>75</td><td>75</td><td>300</td></tr>
<tr><td class="c">071000</td><td class="n">生物学</td><td>50</td><td>45</td><td>75</td><td>75</td><td>300</td></tr>
<tr><td class="c">080500</td><td class="n">材料科学与工程</td><td>50</td><td>45</td><td>75</td><td>75</td><td>300</td></tr>

<tr><td class="s" rowspan="2">医学研究院</td><td class="c">0710</td><td class="n">生物学</td><td>50</td><td>50</td><td>75</td><td>75</td><td>310</td></tr>
<tr><td class="c">1001</td><td class="n">基础医学</td><td>50</td><td>50</td><td>180</td><td class="x">/</td><td>320</td></tr>

<tr><td class="s" rowspan="2">党内法规研究中心</td><td class="c">030103</td><td class="n">宪法学与行政法学</td><td>46</td><td>46</td><td>100</td><td>100</td><td>360</td></tr>
<tr><td class="c">0305Z1</td><td class="n">党的建设</td><td>46</td><td>46</td><td>100</td><td>100</td><td>360</td></tr>

<tr><td class="s" rowspan="7">工业科学研究院</td><td class="c">070207</td><td class="n">光学</td><td>50</td><td>50</td><td>75</td><td>90</td><td>325</td></tr>
<tr><td class="c">080201</td><td class="n">机械制造及其自动化</td><td>50</td><td>50</td><td>75</td><td>90</td><td>325</td></tr>
<tr><td class="c">080202</td><td class="n">机械电子工程</td><td>50</td><td>50</td><td>75</td><td>90</td><td>325</td></tr>
<tr><td class="c">080502</td><td class="n">材料学</td><td>50</td><td>50</td><td>75</td><td>90</td><td>320</td></tr>
<tr><td class="c">080503</td><td class="n">材料加工工程</td><td>50</td><td>50</td><td>75</td><td>90</td><td>320</td></tr>
<tr><td class="c">080702</td><td class="n">热能工程</td><td>50</td><td>50</td><td>75</td><td>90</td><td>325</td></tr>
<tr><td class="c">080903</td><td class="n">微电子学与固体电子学</td><td>50</td><td>50</td><td>75</td><td>90</td><td>325</td></tr>

<tr><td class="s" rowspan="3">单独考试</td><td class="c">030103</td><td class="n">宪法与行政法学</td><td>45</td><td>40</td><td>90</td><td>90</td><td>330</td></tr>
<tr><td class="c">120401</td><td class="n">行政管理</td><td>55</td><td>35</td><td>70</td><td>70</td><td>275</td></tr>
<tr><td class="c">1204Z1</td><td class="n">公共经济管理</td><td>50</td><td>35</td><td>55</td><td>55</td><td>250</td></tr>

<tr><td class="s">强军计划</td><td class="n" colspan="2">各专业</td><td>50</td><td>40</td><td>45</td><td>45</td><td>280</td></tr>
<tr><td class="s">对口支援</td><td class="n" colspan="2">各专业</td><td>50</td><td>40</td><td>70</td><td>70</td><td>248</td></tr>
</tbody>
</table>
</body>
</html>
```

FILE: styles.css
```css
html, body {
  margin: 0;
  padding: 0;
  background: #ffffff;
}

.t {
  border-collapse: collapse;
  table-layout: fixed;
  width: 479px;
  font-family: "Liberation Serif", "Times New Roman", serif;
  color: #555555;
}

.w1 { width: 147px; }
.w2 { width: 34px; }
.w3 { width: 154px; }
.w4 { width: 33px; }
.w5 { width: 30px; }
.w6 { width: 30px; }
.w7 { width: 29px; }
.w8 { width: 22px; }

.t tr {
  height: 10.36px;
}

.t tr.h {
  height: 21.7px;
}

.t th,
.t td {
  border: 1px solid #5e5e5e;
  padding: 0;
  text-align: center;
  vertical-align: middle;
  overflow: hidden;
}

.t th {
  font-family: "Noto Sans CJK SC", "Noto Sans", sans-serif;
  font-weight: normal;
  font-size: 7.6px;
  line-height: 9.4px;
  color: #1e1e1e;
}

.t td {
  font-size: 7.5px;
  line-height: 9px;
  white-space: nowrap;
}

.t td.c {
  font-family: "Liberation Sans", Arial, sans-serif;
  font-size: 6px;
  color: #666666;
}

.t td.n,
.t td.s {
  font-family: "Noto Sans CJK SC", "Noto Sans", sans-serif;
  font-size: 6px;
  letter-spacing: 1.9px;
  padding-left: 1.9px;
  color: #727272;
}

.t td.x {
  color: #8a8a8a;
  font-size: 7px;
}
```
